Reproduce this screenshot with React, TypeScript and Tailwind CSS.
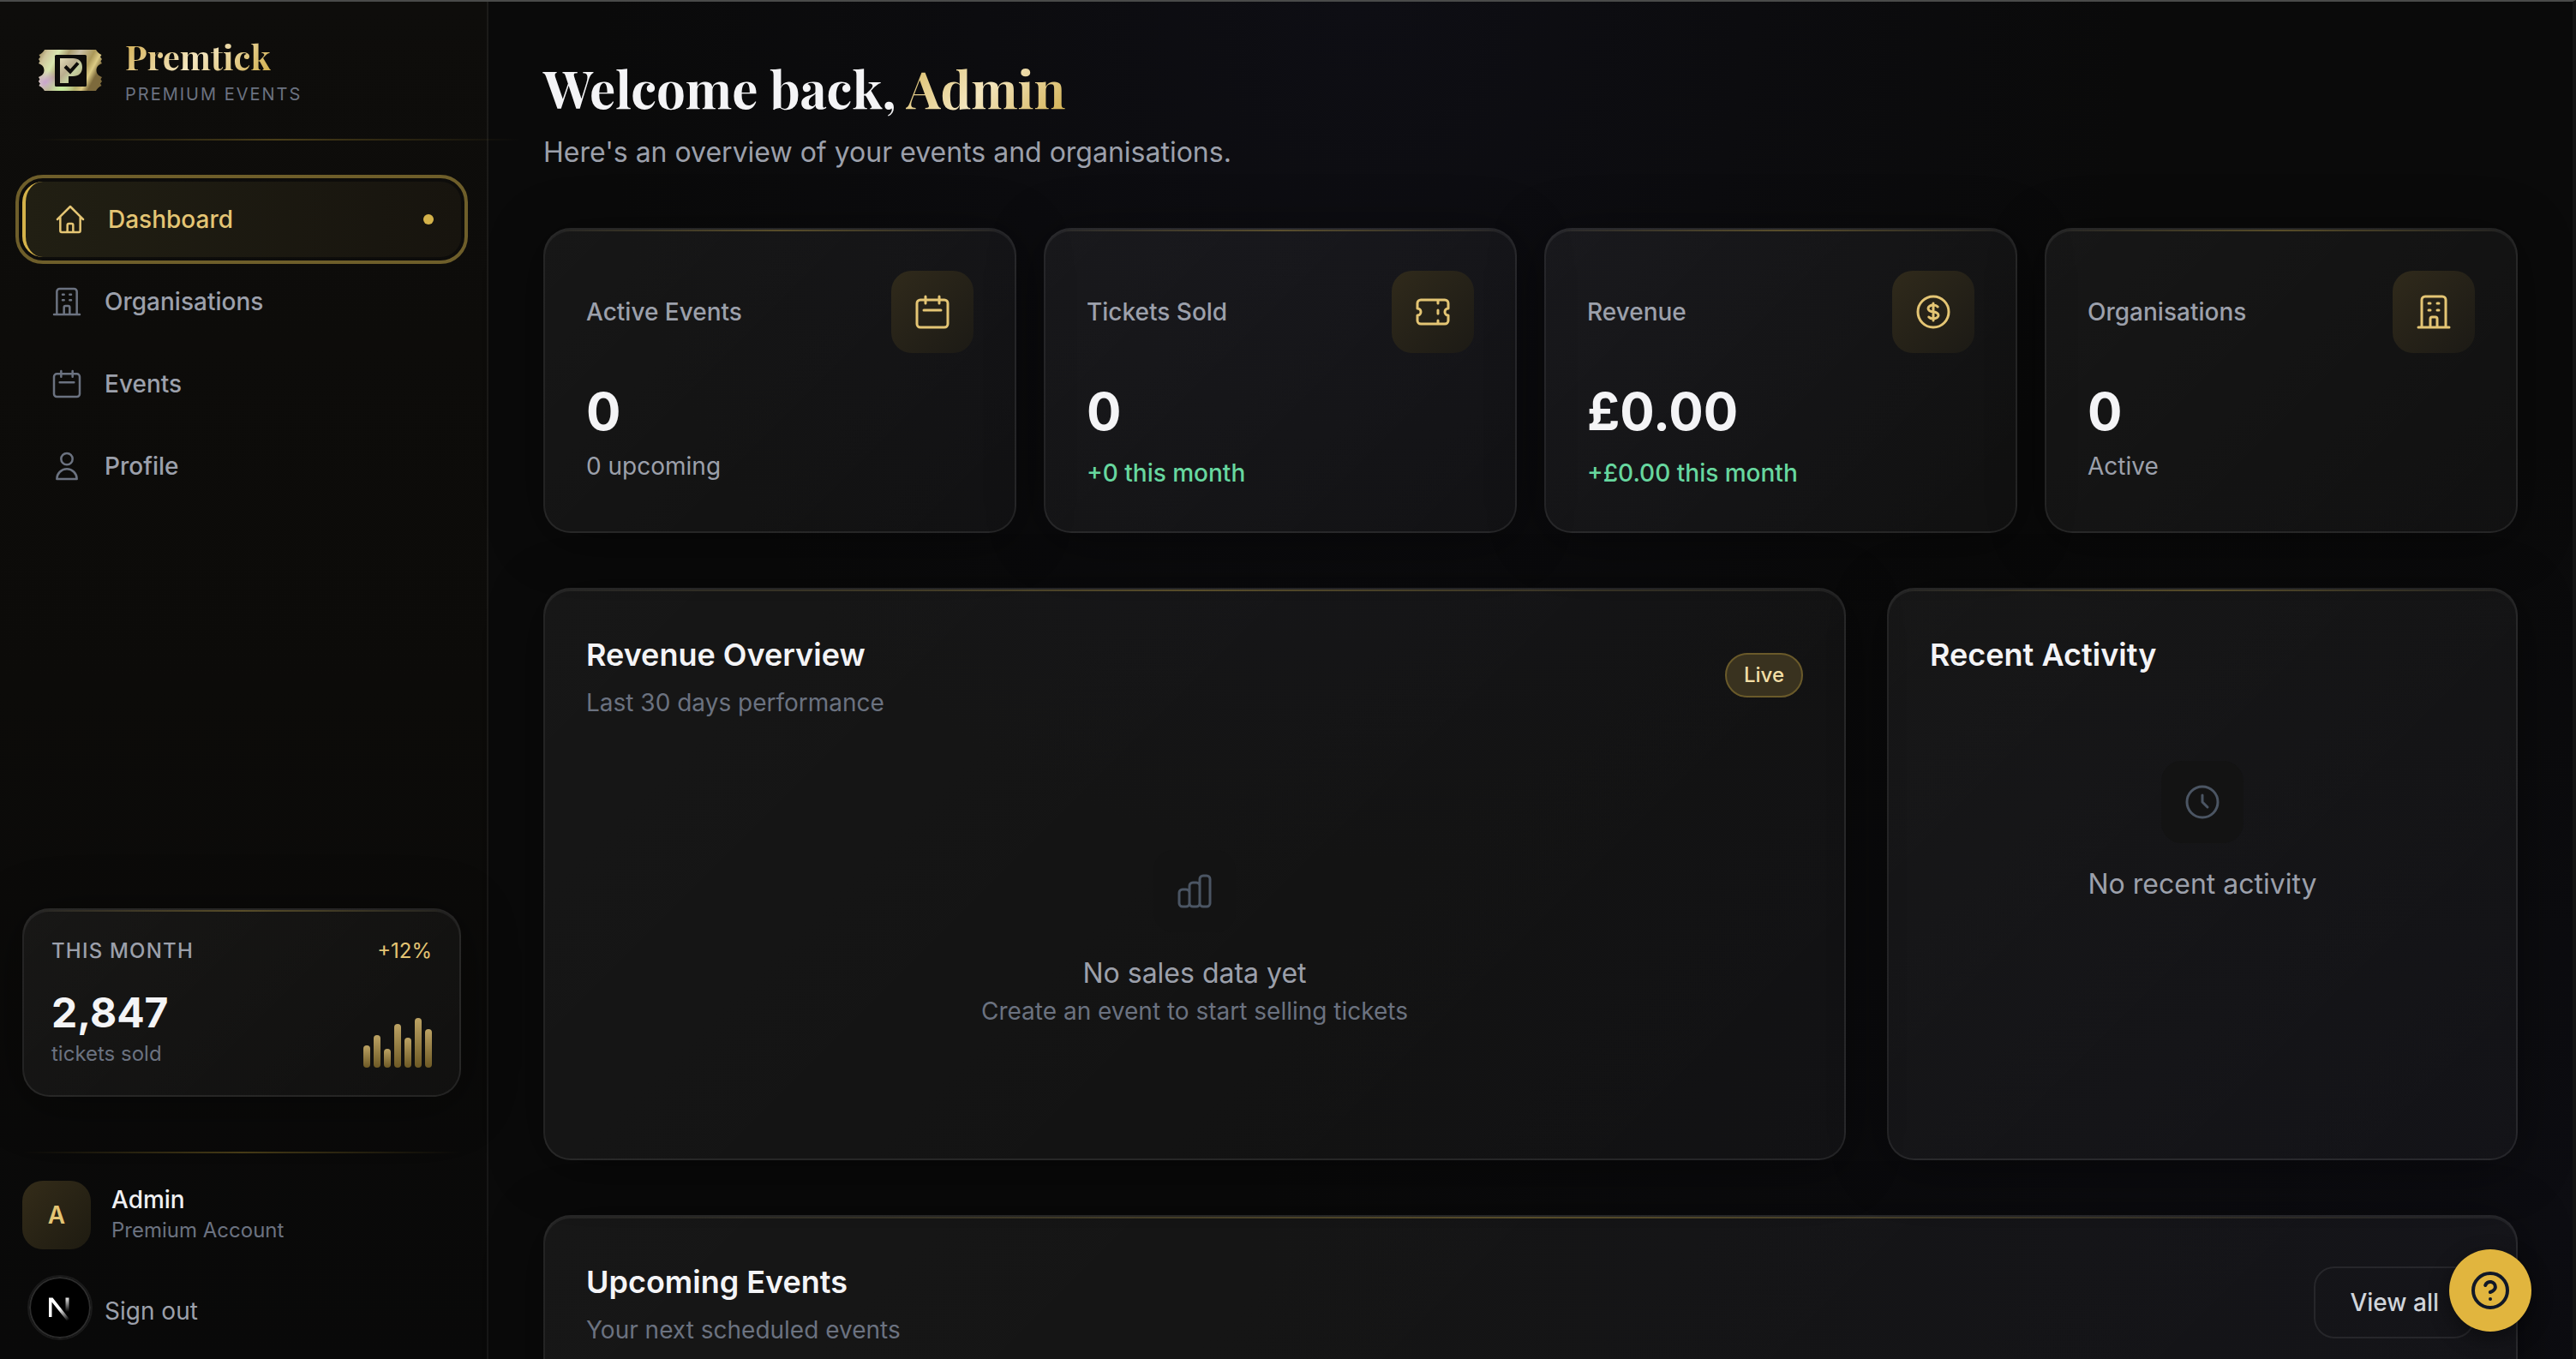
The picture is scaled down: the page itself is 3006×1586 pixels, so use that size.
import type { ReactNode } from 'react';

const ICONS = {
  home: 'M3 12l2-2m0 0l7-7 7 7M5 10v10a1 1 0 001 1h3m10-11l2 2m-2-2v10a1 1 0 01-1 1h-3m-6 0a1 1 0 001-1v-4a1 1 0 011-1h2a1 1 0 011 1v4a1 1 0 001 1m-6 0h6',
  building:
    'M19 21V5a2 2 0 00-2-2H7a2 2 0 00-2 2v16m14 0h2m-2 0h-5m-9 0H3m2 0h5M9 7h1m-1 4h1m4-4h1m-1 4h1m-5 10v-5a1 1 0 011-1h2a1 1 0 011 1v5m-4 0h4',
  calendar: 'M8 7V3m8 4V3m-9 8h10M5 21h14a2 2 0 002-2V7a2 2 0 00-2-2H5a2 2 0 00-2 2v12a2 2 0 002 2z',
  user: 'M16 7a4 4 0 11-8 0 4 4 0 018 0zM12 14a7 7 0 00-7 7h14a7 7 0 00-7-7z',
  ticket:
    'M15 5v2m0 4v2m0 4v2M5 5a2 2 0 00-2 2v3a2 2 0 110 4v3a2 2 0 002 2h14a2 2 0 002-2v-3a2 2 0 110-4V7a2 2 0 00-2-2H5z',
  dollar:
    'M12 8c-1.657 0-3 .895-3 2s1.343 2 3 2 3 .895 3 2-1.343 2-3 2m0-8c1.11 0 2.08.402 2.599 1M12 8V7m0 1v8m0 0v1m0-1c-1.11 0-2.08-.402-2.599-1M21 12a9 9 0 11-18 0 9 9 0 0118 0z',
  chart:
    'M9 19v-6a2 2 0 00-2-2H5a2 2 0 00-2 2v6a2 2 0 002 2h2a2 2 0 002-2zm0 0V9a2 2 0 012-2h2a2 2 0 012 2v10m-6 0a2 2 0 002 2h2a2 2 0 002-2m0 0V5a2 2 0 012-2h2a2 2 0 012 2v14a2 2 0 01-2 2h-2a2 2 0 01-2-2z',
  clock: 'M12 8v4l3 3m6-3a9 9 0 11-18 0 9 9 0 0118 0z',
  logout: 'M17 16l4-4m0 0l-4-4m4 4H7m6 4v1a3 3 0 01-3 3H6a3 3 0 01-3-3V7a3 3 0 013-3h4a3 3 0 013 3v1',
};

type IconName = keyof typeof ICONS;

function Icon({ name, className }: { name: IconName; className: string }) {
  return (
    <svg
      viewBox="0 0 24 24"
      fill="none"
      stroke="currentColor"
      strokeWidth={1.5}
      strokeLinecap="round"
      strokeLinejoin="round"
      aria-hidden="true"
      className={className}
    >
      <path d={ICONS[name]} />
    </svg>
  );
}

function TicketLogo() {
  return (
    <svg viewBox="0 0 80 80" className="size-20 shrink-0" role="img" aria-label="Premtick logo">
      <defs>
        <linearGradient id="foil" x1="0" y1="0" x2="1" y2="0.35">
          <stop offset="0" stopColor="#8f7a4c" />
          <stop offset="0.14" stopColor="#cfc59c" />
          <stop offset="0.3" stopColor="#d9e6b0" />
          <stop offset="0.45" stopColor="#a89a6c" />
          <stop offset="0.6" stopColor="#c9bfa6" />
          <stop offset="0.8" stopColor="#ab9858" />
          <stop offset="0.9" stopColor="#dccb85" />
          <stop offset="1" stopColor="#7d6a3c" />
        </linearGradient>
        <radialGradient id="foilViolet" cx="0.12" cy="0.8" r="0.3">
          <stop offset="0" stopColor="#c9a3cf" />
          <stop offset="1" stopColor="#c9a3cf" stopOpacity="0" />
        </radialGradient>
        <radialGradient id="foilGreen" cx="0.36" cy="0.95" r="0.3">
          <stop offset="0" stopColor="#c6ee9c" />
          <stop offset="1" stopColor="#c6ee9c" stopOpacity="0" />
        </radialGradient>
        <linearGradient id="foilP" x1="0" y1="0" x2="1" y2="1">
          <stop offset="0" stopColor="#e2dcb8" />
          <stop offset="0.4" stopColor="#b9ad8e" />
          <stop offset="0.6" stopColor="#c4cfa0" />
          <stop offset="1" stopColor="#b09c6c" />
        </linearGradient>
        <path
          id="ticketShape"
          d="M10 16H70C71 18.500 74 21 76.500 22L75 24.500L77 27L75.500 29.500L77 32C72.500 33.500 70.500 36.500 70.500 40C70.500 43.500 72.500 46.500 77 48L75.500 50.500L77 53L75 55.500L76.500 58C74 59 71 61.500 70 64H10C9 61.500 6 59 3.500 58L5 55.500L3 53L4.500 50.500L3 48C7.500 46.500 9.500 43.500 9.500 40C9.500 36.500 7.500 33.500 3 32L4.500 29.500L3 27L5 24.500L3.500 22C6 21 9 18.500 10 16Z"
        />
      </defs>
      <use href="#ticketShape" fill="url(#foil)" />
      <use href="#ticketShape" fill="url(#foilViolet)" />
      <use href="#ticketShape" fill="url(#foilGreen)" />
      <rect x="22" y="22" width="37" height="37" rx="1.500" fill="#0d0c0a" />
      <path d="M28 26H43C50 26 54 30 54 36.500C54 43 50 47 43 47H38V55H28Z" fill="url(#foilP)" />
      <path d="M34 35.500L40 41.500L49 31.500" fill="none" stroke="#0d0c0a" strokeWidth="4" />
    </svg>
  );
}

function Card({ className, children }: { className: string; children: ReactNode }) {
  return (
    <section
      className={`relative overflow-hidden rounded-4xl border-2 border-white/8 bg-linear-135 from-[#fff]/[0.055] to-[#fff]/[0.03] shadow-[0_8px_64px_rgba(0,0,0,0.4),inset_0_2px_0_rgba(255,255,255,0.06)] ${className}`}
    >
      <div className="absolute inset-x-0 top-0 h-0.5 bg-linear-to-r from-transparent via-[#d4af37]/30 to-transparent" />
      {children}
    </section>
  );
}

const NAV: { label: string; icon: IconName }[] = [
  { label: 'Organisations', icon: 'building' },
  { label: 'Events', icon: 'calendar' },
  { label: 'Profile', icon: 'user' },
];

const BARS = [40, 60, 35, 80, 55, 90, 70];

function Sidebar() {
  return (
    <aside className="flex w-[570px] shrink-0 flex-col border-r-2 border-white/6 bg-linear-to-b from-[#0e0d0b] via-[#0c0b09] to-[#090909]">
      <div className="flex h-40 items-center gap-6 px-[42px]">
        <TicketLogo />
        <div className="flex flex-col gap-2 pt-1">
          <span className="self-start bg-linear-135 from-[#d4af4e] via-[#f3e5bd] to-[#d0ad45] bg-clip-text font-['Playfair_Display','Liberation_Serif',serif] text-[40px] leading-[44px] font-bold text-transparent">
            Premtick
          </span>
          <span className="text-[20px] leading-7 tracking-widest text-[#6b7280]">PREMIUM EVENTS</span>
        </div>
      </div>
      <div className="-mr-10 ml-10 h-0.5 shrink-0 bg-linear-to-r from-transparent via-[#d4af37]/30 to-transparent" />

      <nav className="flex flex-col gap-2 pt-12 pr-[30px] pl-[26px] text-[28px] leading-10 font-medium">
        <a
          href="#dashboard"
          aria-current="page"
          className="flex h-[88px] items-center gap-6 rounded-3xl border-l-4 border-[#d4b24a] bg-linear-to-r from-[#211f13] to-[#17140e] px-8 text-[#e4c574] outline-4 outline-offset-4 outline-[#6e5e2a]"
        >
          <Icon name="home" className="size-10" />
          Dashboard
          <span className="ml-auto size-3 rounded-full bg-[#d4b24a]" />
        </a>
        {NAV.map((item) => (
          <a
            key={item.label}
            href={`#${item.label.toLowerCase()}`}
            className="flex h-[88px] items-center gap-6 rounded-3xl px-8 text-[#9ca0ab]"
          >
            <Icon name={item.icon} className="size-10 text-[#6b7280]" />
            {item.label}
          </a>
        ))}
      </nav>

      <div className="mt-auto pr-[30px] pb-4 pl-[26px]">
        <Card className="p-8">
          <div className="flex items-center justify-between text-[24px] leading-8">
            <h2 className="font-medium tracking-wider text-[#9ca0ab]">THIS MONTH</h2>
            <span className="text-[#e4c574]">+12%</span>
          </div>
          <div className="mt-6 flex items-end justify-between">
            <div>
              <p className="text-[48px] leading-16 font-bold text-[#f4f4f6]">2,847</p>
              <p className="text-[24px] leading-8 text-[#6b7280]">tickets sold</p>
            </div>
            <div className="flex h-16 items-end gap-1">
              {BARS.map((height, i) => (
                <div
                  key={i}
                  className="w-2 rounded-full bg-linear-to-t from-[#6e5a25] to-[#bda364]"
                  style={{ height: `${height}%` }}
                />
              ))}
            </div>
          </div>
        </Card>

        <div className="mt-16 h-0.5 bg-linear-to-r from-transparent via-[#d4af37]/30 to-transparent" />

        <div className="mt-8 flex items-center gap-6">
          <div className="flex size-20 items-center justify-center rounded-3xl bg-linear-135 from-[#342c19] to-[#1e1b11] text-[28px] font-semibold text-[#e4c574]">
            A
          </div>
          <div>
            <p className="text-[28px] leading-9 font-medium text-[#f0f0f2]">Admin</p>
            <p className="text-[24px] leading-9 text-[#6b7280]">Premium Account</p>
          </div>
        </div>

        <button type="button" className="mt-8 flex h-20 items-center gap-6 pl-8 text-[28px] leading-10 text-[#9ca0ab]">
          <Icon name="logout" className="size-10 text-[#6b7280]" />
          Sign out
        </button>
      </div>
    </aside>
  );
}

function DevToolsBadge() {
  return (
    <button
      type="button"
      aria-label="Open developer tools"
      className="fixed bottom-[22px] left-8 flex size-[76px] items-center justify-center rounded-full border-2 border-[#1a1a1a] bg-black shadow-[inset_0_0_0_2px_#2c2c2c]"
    >
      <svg viewBox="0 0 28 30" fill="none" className="h-[30px] w-7" aria-hidden="true">
        <defs>
          <linearGradient id="diag" gradientUnits="userSpaceOnUse" x1="14" y1="16" x2="25" y2="29">
            <stop offset="0" stopColor="#fff" />
            <stop offset="1" stopColor="#fff" stopOpacity="0" />
          </linearGradient>
          <linearGradient id="stem" gradientUnits="userSpaceOnUse" x1="23" y1="2" x2="23" y2="20">
            <stop offset="0" stopColor="#fff" />
            <stop offset="1" stopColor="#fff" stopOpacity="0" />
          </linearGradient>
        </defs>
        <path d="M1 26V3.500H5.500L25.500 29L22.500 31L4.500 8.500V26Z" fill="url(#diag)" />
        <path d="M20.500 3.500H24.500V20H20.500Z" fill="url(#stem)" />
      </svg>
    </button>
  );
}

const STATS: { label: string; icon: IconName; value: string; note: string; gain: boolean }[] = [
  { label: 'Active Events', icon: 'calendar', value: '0', note: '0 upcoming', gain: false },
  { label: 'Tickets Sold', icon: 'ticket', value: '0', note: '+0 this month', gain: true },
  { label: 'Revenue', icon: 'dollar', value: '£0.00', note: '+£0.00 this month', gain: true },
  { label: 'Organisations', icon: 'building', value: '0', note: 'Active', gain: false },
];

function PanelTitle({ title, subtitle }: { title: string; subtitle?: string }) {
  return (
    <div>
      <h2 className="text-[36px] leading-14 font-semibold text-[#f4f4f6]">{title}</h2>
      {subtitle && <p className="mt-2 text-[28px] leading-10 text-[#6b7280]">{subtitle}</p>}
    </div>
  );
}

function EmptyState({ icon, title, hint }: { icon: IconName; title: string; hint?: string }) {
  return (
    <div className="flex flex-col items-center text-center">
      <div className="mb-6 flex size-24 items-center justify-center rounded-3xl bg-[#131313]">
        <Icon name={icon} className="size-12 text-[#4b5563]" />
      </div>
      <p className="text-[32px] leading-12 text-[#9ca0ab]">{title}</p>
      {hint && <p className="text-[28px] leading-10 text-[#6b7280]">{hint}</p>}
    </div>
  );
}

export default function App() {
  return (
    <div className="flex h-screen overflow-hidden border-t-2 border-r-4 border-t-[#4a4b4a] border-r-[#141414] bg-[#0a0a0a] font-['Inter','Liberation_Sans',sans-serif] antialiased">
      <Sidebar />
      <main className="flex min-w-0 flex-1 flex-col gap-16 bg-[radial-gradient(ellipse_at_42%_0%,#0e0e14_0%,transparent_45%),radial-gradient(ellipse_at_100%_90%,#0d0d12_0%,transparent_45%)] px-16 pt-16">
        <header>
          <h1 className="font-['Playfair_Display','Liberation_Serif',serif] text-[60px] leading-[72px] font-bold text-[#f4f4f6]">
            Welcome back,{' '}
            <span className="bg-linear-135 from-[#d8b95c] via-[#f3e5bd] to-[#d0ad45] bg-clip-text text-transparent">
              Admin
            </span>
          </h1>
          <p className="mt-4 text-[32px] leading-12 text-[#9ca0ab]">
            Here's an overview of your events and organisations.
          </p>
        </header>

        <div className="grid grid-cols-4 gap-8">
          {STATS.map((stat) => (
            <Card key={stat.label} className="p-12">
              <div className="flex items-center justify-between">
                <h2 className="text-[28px] leading-10 font-medium text-[#9ca0ab]">{stat.label}</h2>
                <div className="flex size-24 items-center justify-center rounded-3xl bg-linear-135 from-[#302a1b] to-[#1c1a15]">
                  <Icon name={stat.icon} className="size-12 text-[#e4c574]" />
                </div>
              </div>
              <p className="mt-8 text-[60px] leading-[72px] font-bold text-[#f4f4f6]">{stat.value}</p>
              {stat.gain ? (
                <p className="mt-4 text-[28px] leading-10 font-medium text-[#67d79f]">{stat.note}</p>
              ) : (
                <p className="mt-2 text-[28px] leading-10 text-[#9ca0ab]">{stat.note}</p>
              )}
            </Card>
          ))}
        </div>

        <div className="grid grid-cols-3 gap-12">
          <Card className="col-span-2 p-12">
            <div className="flex items-center justify-between">
              <PanelTitle title="Revenue Overview" subtitle="Last 30 days performance" />
              <span className="rounded-full border-2 border-[#6a5a2a] bg-[#39321f] px-5 py-2 text-[24px] leading-8 font-medium text-[#f3dfa6]">
                Live
              </span>
            </div>
            <div className="mt-12 py-26">
              <EmptyState icon="chart" title="No sales data yet" hint="Create an event to start selling tickets" />
            </div>
          </Card>
          <Card className="p-12">
            <PanelTitle title="Recent Activity" />
            <div className="mt-12 py-12">
              <EmptyState icon="clock" title="No recent activity" />
            </div>
          </Card>
        </div>

        <Card className="shrink-0 p-12">
          <div className="flex items-center justify-between">
            <PanelTitle title="Upcoming Events" subtitle="Your next scheduled events" />
            <button
              type="button"
              className="rounded-3xl border-2 border-white/8 px-10 py-5 text-[28px] leading-10 font-medium text-[#d1d5db]"
            >
              View all
            </button>
          </div>
          <div className="h-96" />
        </Card>
      </main>

      <DevToolsBadge />

      <button
        type="button"
        aria-label="Help"
        className="fixed right-[52px] bottom-8 flex size-24 items-center justify-center rounded-full bg-[#e1b53e] text-[#111827] shadow-[0_8px_24px_rgba(0,0,0,0.4)]"
      >
        <svg
          viewBox="0 0 24 24"
          fill="none"
          stroke="currentColor"
          strokeWidth={2}
          strokeLinecap="round"
          strokeLinejoin="round"
          className="size-12"
          aria-hidden="true"
        >
          <circle cx="12" cy="12" r="10" />
          <path d="M9.090 9a3 3 0 0 1 5.830 1c0 2-3 3-3 3" />
          <path d="M12 17h.01" />
        </svg>
      </button>
    </div>
  );
}
